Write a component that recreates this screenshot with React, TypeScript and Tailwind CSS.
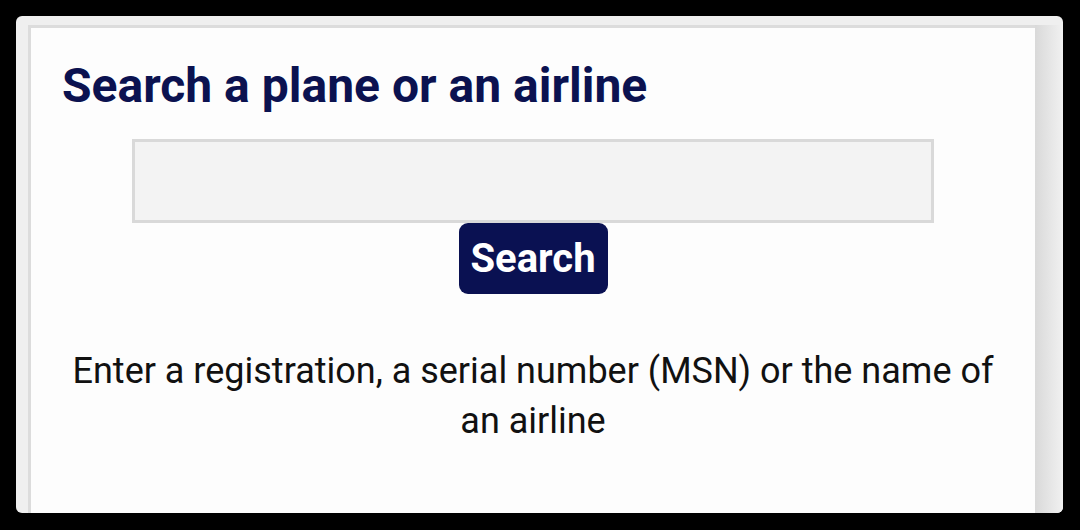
import React from "react";

export default function App() {
  return (
    <div className="w-[1080px] h-[530px] bg-black pt-4 pl-4 overflow-hidden" style={{ fontFamily: "Roboto, 'Liberation Sans', sans-serif" }}>
      <div className="w-[1047px] h-[497px] rounded-[6px] bg-[#efefef] flex pt-[9px] pl-[12px] overflow-hidden">
        <div className="w-[1007px] h-full bg-[#fdfdfd] border-t-[3px] border-l-[3px] border-[#dcdcdc] flex flex-col">
          <h1 className="pl-[31px] mt-[30px] text-[48px] leading-[56px] font-bold text-[#0b1250]">
            Search a plane or an airline
          </h1>
          <div className="flex flex-col items-center mt-[25px]">
            <div className="w-[802px] h-[84px] bg-[#f3f3f3] border-[3px] border-[#d9d9d9]" />
            <button className="w-[149px] h-[71px] rounded-[9px] bg-[#0a1152] text-white text-[40px] font-bold leading-none">
              Search
            </button>
          </div>
          <p className="mt-[52px] px-[36px] text-center text-[36px] leading-[50px] text-[#111]">
            Enter a registration, a serial number (MSN) or the name of an airline
          </p>
        </div>
        <div className="flex-1 h-full bg-gradient-to-r from-[#d9d9d9] to-[#f1f1f1]" />
      </div>
    </div>
  );
}
